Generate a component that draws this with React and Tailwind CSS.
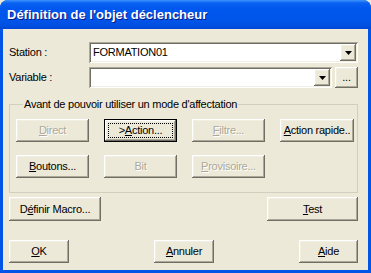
const raised =
    'bg-[#ECE9D8] shadow-[inset_-1px_-1px_#716F64,inset_1px_1px_#fff,inset_-2px_-2px_#ACA899,inset_2px_2px_#F1EFE2]';
const sunken =
    'bg-white shadow-[inset_1px_1px_#ACA899,inset_-1px_-1px_#fff,inset_2px_2px_#716F64,inset_-2px_-2px_#F1EFE2]';

function Btn({ children, className = '', disabled, isDefault }) {
    if (isDefault) {
        return (
            <div className={`border border-black ${className}`}>
                <div className={`${raised} h-full flex items-center justify-center relative`}>
                    <div className="absolute inset-[3px] border border-dotted border-black" />
                    <span>{children}</span>
                </div>
            </div>
        );
    }
    return (
        <div className={`${raised} flex items-center justify-center ${className}`}>
            <span className={disabled ? 'text-[#ACA899] [text-shadow:1px_1px_0_#fff]' : ''}>{children}</span>
        </div>
    );
}

function Arrow() {
    return (
        <div className={`${raised} w-[16px] h-full flex items-center justify-center`}>
            <svg width="7" height="4" viewBox="0 0 7 4">
                <path d="M0 0H7L3.5 4Z" fill="#000" />
            </svg>
        </div>
    );
}

function U({ children }) {
    return <span className="underline underline-offset-[1px]">{children}</span>;
}

export default function App() {
    return (
        <div className="w-[371px] h-[273px] bg-[#ECE9D8]">
            <div className="w-[371px] h-[273px] rounded-t-[8px] bg-[#0055E6] flex flex-col overflow-hidden font-['Liberation_Sans',Arial,sans-serif] text-[11px] tracking-[-0.25px] text-black">
                <div className="h-[29px] shrink-0 flex items-center pl-[7px] pt-[1px] bg-[linear-gradient(to_bottom,#3D95FF_0px,#0A62F2_3px,#0058EE_8px,#0055EA_20px,#004FE0_26px,#0046D5_29px)]">
                    <span className="text-white font-bold text-[13px] tracking-normal [text-shadow:1px_1px_0_#0A1883]">
                        Définition de l'objet déclencheur
                    </span>
                </div>
                <div className="flex-1 mx-[3px] mb-[3px] bg-[#ECE9D8] pl-[6px] pr-[10px] pt-[13px]">
                    <div className="flex items-center h-[21px]">
                        <span className="w-[80px]">Station :</span>
                        <div className={`${sunken} flex-1 h-full flex items-center p-[2px]`}>
                            <span className="flex-1 pl-[2px]">FORMATION01</span>
                            <Arrow />
                        </div>
                    </div>
                    <div className="flex items-center h-[21px] mt-[4px]">
                        <span className="w-[80px]">Variable :</span>
                        <div className={`${sunken} w-[243px] h-full flex items-center p-[2px]`}>
                            <span className="flex-1" />
                            <Arrow />
                        </div>
                        <Btn className="ml-[3px] w-[23px] h-full">...</Btn>
                    </div>
                    <fieldset className="mt-[10px] border border-[#D0D0BF] pl-[6px] pt-[8px] pb-[14px]">
                        <legend className="ml-[7px] px-[1px] leading-[13px]">
                            Avant de pouvoir utiliser un mode d'affectation
                        </legend>
                        <div className="flex gap-[15px]">
                            <Btn disabled className="w-[73px] h-[23px]"><U>D</U>irect</Btn>
                            <Btn isDefault className="w-[73px] h-[23px]">&gt;<U>A</U>ction...</Btn>
                            <Btn disabled className="w-[73px] h-[23px]"><U>F</U>iltre...</Btn>
                            <Btn className="w-[74px] h-[23px]"><U>A</U>ction rapide..</Btn>
                        </div>
                        <div className="flex gap-[15px] mt-[13px]">
                            <Btn className="w-[73px] h-[23px]"><U>B</U>outons...</Btn>
                            <Btn disabled className="w-[73px] h-[23px]">Bit</Btn>
                            <Btn disabled className="w-[73px] h-[23px]"><U>P</U>rovisoire...</Btn>
                        </div>
                    </fieldset>
                    <div className="flex justify-between mt-[4px]">
                        <Btn className="w-[92px] h-[24px]">D<U>é</U>finir Macro...</Btn>
                        <Btn className="w-[91px] h-[24px]"><U>T</U>est</Btn>
                    </div>
                    <div className="flex justify-between mt-[19px]">
                        <Btn className="w-[60px] h-[23px]"><U>O</U>K</Btn>
                        <Btn className="w-[60px] h-[23px]"><U>A</U>nnuler</Btn>
                        <Btn className="w-[59px] h-[23px]"><U>A</U>ide</Btn>
                    </div>
                </div>
            </div>
        </div>
    );
}
